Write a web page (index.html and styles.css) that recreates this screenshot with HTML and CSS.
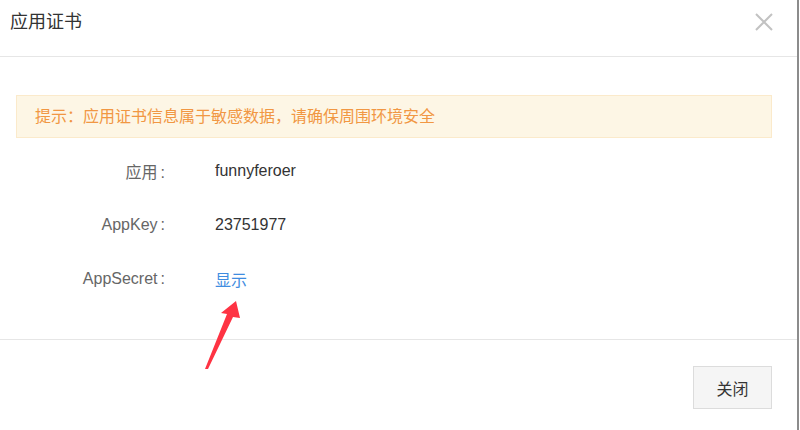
FILE: index.html
```html
<!DOCTYPE html>
<html lang="zh-CN">
<head>
    <meta charset="UTF-8">
    <title>应用证书</title>
    <link rel="stylesheet" href="styles.css">
</head>
<body>
    <div class="dialog">
        <div class="dialog-header">
            <span class="dialog-title">应用证书</span>
            <span class="dialog-close">
                <svg width="18" height="18" viewBox="0 0 18 18">
                    <path d="M1 1 L17 17 M17 1 L1 17" stroke="#c2c2c2" stroke-width="2" fill="none"/>
                </svg>
            </span>
        </div>

        <div class="dialog-body">
            <div class="alert">提示：应用证书信息属于敏感数据，请确保周围环境安全</div>
            <div class="info-row">
                <div class="info-label">应用<span class="colon">:</span></div>
                <div class="info-value">funnyferoer</div>
            </div>
            <div class="info-row">
                <div class="info-label">AppKey<span class="colon">:</span></div>
                <div class="info-value">23751977</div>
            </div>
            <div class="info-row">
                <div class="info-label">AppSecret<span class="colon">:</span></div>
                <div class="info-value"><a class="link" href="#">显示</a></div>
            </div>
        </div>

        <div class="dialog-footer">
            <button class="btn">关闭</button>
        </div>

        <!-- annotation arrow -->
        <svg class="mark-arrow" width="800" height="430" viewBox="0 0 800 430">
            <polygon points="236,301 221,313 227,314 205,369 208,369 233,317 240,318" fill="#fe3343"/>
        </svg>
    </div>
</body>
</html>
```

FILE: styles.css
```css
body {
    margin: 0;
    background: #fff;
    font-family: "Liberation Sans", "Noto Sans CJK SC", sans-serif;
    color: #333;
}

.dialog {
    position: relative;
    width: 797px;
    height: 430px;
    border-right: 2px solid #8c8c8c;
    background: #fff;
}

.dialog-header {
    height: 57px;
    box-sizing: border-box;
    padding: 11px 24px 0 10px;
    border-bottom: 1px solid #e6e6e6;
    display: flex;
    justify-content: space-between;
    align-items: flex-start;
}

.dialog-title {
    font-size: 18px;
    line-height: 22px;
    color: #333;
}

.dialog-close {
    margin-top: 2px;
    line-height: 0;
}

.dialog-body {
    padding: 38px 25px 33px 16px;
}

.alert {
    height: 43px;
    box-sizing: border-box;
    background: #fdf6e5;
    border: 1px solid #fbeacb;
    color: #f19743;
    font-size: 16px;
    line-height: 41px;
    padding-left: 18px;
    margin-bottom: 6px;
}

.info-row {
    display: flex;
    height: 54px;
    align-items: center;
    font-size: 16px;
}

.info-label {
    width: 149px;
    text-align: right;
    color: #666;
}

.colon {
    margin-left: 3px;
}

.info-value {
    margin-left: 50px;
    color: #333;
}

.link {
    color: #3f8ce0;
    text-decoration: none;
}

.dialog-footer {
    border-top: 1px solid #e6e6e6;
    padding: 26px 25px 0 0;
    display: flex;
    justify-content: flex-end;
}

.btn {
    width: 79px;
    height: 43px;
    background: #f5f5f5;
    border: 1px solid #dcdcdc;
    font-family: "Liberation Sans", "Noto Sans CJK SC", sans-serif;
    font-size: 16px;
    color: #333;
}

.mark-arrow {
    position: absolute;
    left: 0;
    top: 0;
    pointer-events: none;
}
```
